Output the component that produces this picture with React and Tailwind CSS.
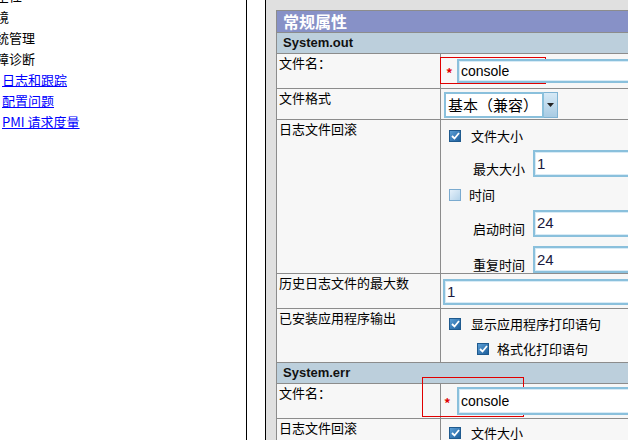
import React from 'react';

const cjk = "font-['Noto_Sans_CJK_SC','Noto_Sans',sans-serif]";

function Box({ checked }) {
  if (checked) {
    return (
      <span className="inline-flex h-[12px] w-[12px] shrink-0 items-center justify-center border border-[#1f5a8e] bg-gradient-to-br from-[#5b9fd6] to-[#1d5f9c]">
        <svg width="9" height="8" viewBox="0 0 9 8">
          <path d="M1 4 L3.5 6.5 L8 1" fill="none" stroke="#fff" strokeWidth="1.8" />
        </svg>
      </span>
    );
  }
  return (
    <span className="inline-block h-[12px] w-[12px] shrink-0 border border-[#7aaacf] bg-gradient-to-br from-[#e6f1fa] to-[#b4d3ea]" />
  );
}

function Field({ value, className = '' }) {
  return (
    <div
      className={`flex items-center border-2 border-[#8ac0dc] bg-white pl-[2px] font-['Liberation_Sans',sans-serif] text-[15px] text-[#1a1a40] shadow-[inset_0_0_0_1px_#d8ebf6] ${className}`}
    >
      {value}
    </div>
  );
}

function Row({ label, h, children }) {
  return (
    <div className={`flex border-b border-[#8c8c8c] ${h}`}>
      <div className="w-[164px] shrink-0 border-r border-[#8c8c8c] pl-[2px] text-[13px] leading-[17px] text-black">
        {label}
      </div>
      <div className="relative flex-1">{children}</div>
    </div>
  );
}

function Band({ children }) {
  return (
    <div className="h-[21px] border-b border-[#8c8c8c] bg-[#bccfdc] pl-[6px] font-['Liberation_Sans',sans-serif] text-[13px] font-bold leading-[20px] text-[#111]">
      {children}
    </div>
  );
}

export default function App() {
  return (
    <div className={`flex h-[440px] w-[628px] overflow-hidden bg-white ${cjk}`}>
      {/* navigation tree, scrolled to the right */}
      <nav className="mt-[-15px] w-[246px] shrink-0 overflow-hidden text-[13px] leading-[21px]">
        <div className="ml-[-17px] text-black">安全性</div>
        <div className="ml-[-17px] text-black">环境</div>
        <div className="ml-[-17px] text-black">系统管理</div>
        <div className="ml-[-17px] text-black">故障诊断</div>
        <div className="pl-[2px]"><a className="text-[#0000ff] underline">日志和跟踪</a></div>
        <div className="pl-[2px]"><a className="text-[#0000ff] underline">配置问题</a></div>
        <div className="pl-[2px]"><a className="text-[#0000ff] underline">PMI 请求度量</a></div>
      </nav>
      <div className="w-px shrink-0 bg-black" />
      <div className="w-[18px] shrink-0 bg-white" />
      <div className="w-px shrink-0 bg-black" />

      <div className="flex-1 overflow-hidden bg-[#e0e0e0] pl-[10px] pt-[10px]">
        <div className="w-[420px] border border-[#8c8c8c] bg-[#f7f7f7]">
          <div className="h-[22px] border-b border-[#8c8c8c] bg-[#8791c7] pl-[6px] text-[16px] font-bold leading-[21px] text-white">
            常规属性
          </div>
          <Band>System.out</Band>

          <Row label="文件名：" h="h-[35px]">
            <div className="absolute left-[-1px] top-[3px] h-[27px] w-[106px] border border-[#e00000]" />
            <span className="absolute left-[5px] top-[9px] text-[13px] font-bold text-[#e00000]">*</span>
            <Field value="console" className="absolute left-[16px] top-[5px] h-[24px] w-[200px] font-['Liberation_Sans',sans-serif] !text-[14px] !text-black" />
          </Row>

          <Row label="文件格式" h="h-[31px]">
            <div className="ml-[3px] mt-[3px] flex h-[26px]">
              <div className="flex w-[100px] items-center border-2 border-[#8ac0dc] bg-white pl-[2px] text-[15px] text-black">
                基本（兼容）
              </div>
              <div className="flex w-[14px] items-center justify-center border border-l-0 border-[#7fb3d3] bg-gradient-to-b from-[#d6e9f6] to-[#a8cbe3]">
                <svg width="7" height="4" viewBox="0 0 7 4"><path d="M0 0 H7 L3.5 4 Z" fill="#222" /></svg>
              </div>
            </div>
          </Row>

          <Row label="日志文件回滚" h="h-[154px]">
            <div className="flex flex-col pl-[8px] text-[13px] text-black">
              <div className="mt-[10px] flex h-[12px] items-center gap-[10px]">
                <Box checked /> <span>文件大小</span>
              </div>
              <div className="mt-[7px] flex items-center pl-[24px]">
                <span className="mt-[10px] w-[60px]">最大大小</span>
                <Field value="1" className="h-[27px] w-[120px]" />
              </div>
              <div className="mt-[10px] flex h-[12px] items-center gap-[8px]">
                <Box /> <span>时间</span>
              </div>
              <div className="mt-[8px] flex items-center pl-[24px]">
                <span className="mt-[10px] w-[60px]">启动时间</span>
                <Field value="24" className="h-[27px] w-[120px]" />
              </div>
              <div className="mt-[7px] flex items-center pl-[24px]">
                <span className="mt-[10px] w-[60px]">重复时间</span>
                <Field value="24" className="h-[27px] w-[120px]" />
              </div>
            </div>
          </Row>

          <Row label="历史日志文件的最大数" h="h-[35px]">
            <Field value="1" className="ml-[2px] mt-[5px] h-[26px] w-[220px]" />
          </Row>

          <Row label="已安装应用程序输出" h="h-[54px]">
            <div className="flex flex-col pl-[8px] text-[13px] text-black">
              <div className="mt-[9px] flex h-[12px] items-center gap-[10px]">
                <Box checked /> <span>显示应用程序打印语句</span>
              </div>
              <div className="mt-[13px] flex h-[12px] items-center gap-[8px] pl-[28px]">
                <Box checked /> <span>格式化打印语句</span>
              </div>
            </div>
          </Row>

          <Band>System.err</Band>

          <Row label="文件名：" h="h-[35px]">
            <div className="absolute left-[-19px] top-[-7px] h-[40px] w-[102px] border border-[#e00000]" />
            <span className="absolute left-[3px] top-[9px] text-[13px] font-bold text-[#e00000]">*</span>
            <Field value="console" className="absolute left-[16px] top-[3px] h-[28px] w-[200px] !text-[14px] !text-black" />
          </Row>

          <Row label="日志文件回滚" h="h-[60px]">
            <div className="flex flex-col pl-[8px] text-[13px] text-black">
              <div className="mt-[8px] flex h-[12px] items-center gap-[10px]">
                <Box checked /> <span>文件大小</span>
              </div>
            </div>
          </Row>
        </div>
      </div>
    </div>
  );
}
